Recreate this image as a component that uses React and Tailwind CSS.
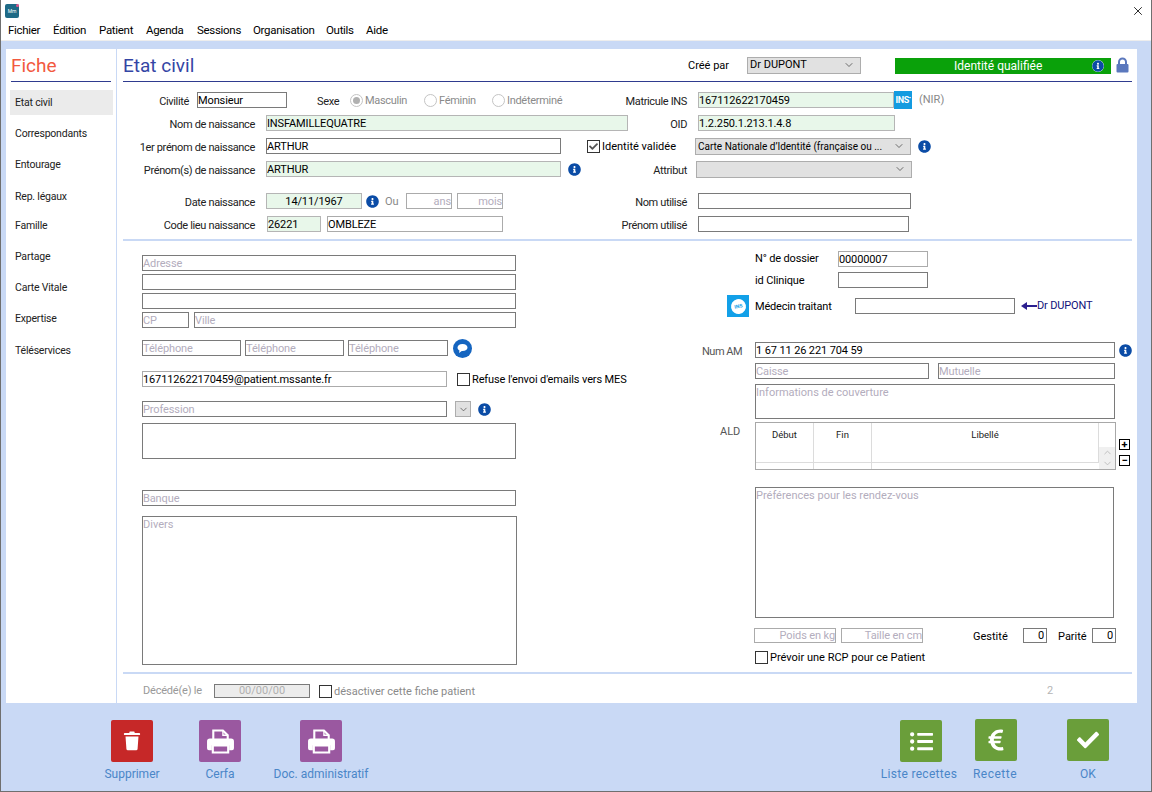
import { FaCheck, FaEuroSign, FaInfoCircle, FaListUl } from 'react-icons/fa';
import { ChevronDown, ChevronUp, X } from 'lucide-react';

const NAV = [
  ['Etat civil', 'mt-[8px] h-[25px]'],
  ['Correspondants', 'mt-[6px] h-[26px]'],
  ['Entourage', 'mt-[5px] h-[26px]'],
  ['Rep. légaux', 'mt-[6px] h-[26px]'],
  ['Famille', 'mt-[3px] h-[26px]'],
  ['Partage', 'mt-[5px] h-[26px]'],
  ['Carte Vitale', 'mt-[5px] h-[26px]'],
  ['Expertise', 'mt-[5px] h-[26px]'],
  ['Téléservices', 'mt-[6px] h-[26px]'],
];

function Field({ value, placeholder, className = '', green, soft, right, center, disabled }) {
  return (
    <input
      readOnly
      disabled={disabled}
      value={value || ''}
      placeholder={placeholder}
      className={`block h-[16px] shrink-0 border px-0 pt-[2px] text-[11px] tracking-[-0.12px] text-black outline-none placeholder:text-[#b3adbd] ${
        green ? 'border-[#b5b5b5] bg-[#e8f7ea]' : 'bg-white'
      } ${soft ? 'border-[#ababab]' : green ? '' : 'border-[#7a7a7a]'} ${right ? 'text-right placeholder:text-right' : ''} ${center ? 'text-center placeholder:text-center' : ''} ${className}`}
    />
  );
}

function Area({ placeholder, className = '' }) {
  return (
    <div className={`shrink-0 border border-[#7a7a7a] bg-white text-[11px] leading-[15px] text-[#b3adbd] ${className}`}>
      {placeholder}
    </div>
  );
}

function Label({ children, className = '' }) {
  return <div className={`shrink-0 whitespace-nowrap pt-[3px] text-right text-[11px] leading-[16px] tracking-[-0.35px] text-[#222] ${className}`}>{children}</div>;
}

function Select({ value, className = '' }) {
  return (
    <div className={`flex h-[17px] shrink-0 items-center justify-between border border-[#adadad] bg-[#e1e1e1] pl-[2px] pr-[5px] text-[11px] text-black ${className}`}>
      <span className="truncate">{value}</span>
      <ChevronDown size={12} strokeWidth={1.5} className="shrink-0 text-[#444]" />
    </div>
  );
}

function Info({ className = '' }) {
  return <FaInfoCircle size={13} className={`shrink-0 text-[#0b4ca6] ${className}`} />;
}

function Radio({ checked, label, className = '' }) {
  return (
    <div className={`flex shrink-0 items-center gap-[2px] text-[11px] tracking-[-0.3px] text-[#8a8a8a] ${className}`}>
      <span className="flex h-[13px] w-[13px] items-center justify-center rounded-full border border-[#c4c4c4] bg-white">
        {checked && <span className="h-[7px] w-[7px] rounded-full bg-[#b0b0b0]" />}
      </span>
      <span className="pt-[2px]">{label}</span>
    </div>
  );
}

function Check({ checked, label, className = '', muted }) {
  return (
    <div className={`flex shrink-0 items-center gap-[2px] text-[11px] ${muted ? 'text-[#8a8a8a]' : 'text-black'} ${className}`}>
      <span className="flex h-[13px] w-[13px] items-center justify-center border border-[#333] bg-white">
        {checked && <FaCheck size={9} className="text-[#555]" />}
      </span>
      <span className="pt-[2px]">{label}</span>
    </div>
  );
}

function TrashIcon() {
  return (
    <svg width="18" height="20" viewBox="0 0 20 22" fill="white">
      <rect x="1" y="2" width="18" height="2.4" rx="1" />
      <rect x="7" y="0.5" width="6" height="2" rx="1" />
      <path d="M2.8 6h14.4l-1 14a1.6 1.6 0 0 1-1.6 1.4H5.4A1.6 1.6 0 0 1 3.8 20z" />
    </svg>
  );
}

function PrintIcon() {
  return (
    <svg width="27" height="25" viewBox="0 0 28 26" fill="none" stroke="white" strokeWidth="2.2">
      <path d="M6.5 11V1.5h10l5 5V11" />
      <path d="M16.5 1.5v5h5" strokeWidth="1.4" />
      <path fill="white" stroke="none" d="M3 10h22a3 3 0 0 1 3 3v7a2 2 0 0 1-2 2h-3v-5H5v5H2a2 2 0 0 1-2-2v-7a3 3 0 0 1 3-3z" />
      <path d="M6 17h16v7.5H6z" />
    </svg>
  );
}

function Action({ label, color, width, children, className = '', labelClass = 'mt-[4px]' }) {
  return (
    <div className={`flex shrink-0 flex-col items-center ${className}`} style={{ width }}>
      <div className={`flex h-[42px] w-[42px] items-center justify-center rounded-[2px] ${color}`}>{children}</div>
      <div className={`whitespace-nowrap text-[12px] leading-[16px] text-[#4a86c8] ${labelClass}`}>{label}</div>
    </div>
  );
}

export default function App() {
  return (
    <div className="flex h-[792px] w-[1152px] flex-col overflow-hidden border-x border-b border-[#6f6f6f] bg-[#c9d9f5] font-['Roboto',sans-serif] text-black">
      {/* title bar */}
      <div className="relative h-[21px] shrink-0 bg-white pl-[4px] pt-[4px]">
        <div className="relative flex h-[14px] w-[14px] items-center justify-center rounded-[2px] bg-[#1e6a86] text-[5px] leading-none text-white">
          Mm
          <span className="absolute right-0 top-0 h-[3px] w-[3px] rounded-full bg-[#e0558a]" />
        </div>
        <X size={14} strokeWidth={1.4} className="absolute right-[6px] top-[4px] text-black" />
      </div>
      {/* menu */}
      <div className="flex h-[20px] shrink-0 items-center border-b border-[#ededed] bg-white pl-[7px] pt-[1px] text-[11.5px] tracking-[-0.3px] text-black">
        <span className="w-[45px]">Fichier</span>
        <span className="w-[46px]">Édition</span>
        <span className="w-[47px]">Patient</span>
        <span className="w-[51px]">Agenda</span>
        <span className="w-[56px]">Sessions</span>
        <span className="w-[73px]">Organisation</span>
        <span className="w-[40px]">Outils</span>
        <span>Aide</span>
      </div>

      {/* white panel */}
      <div className="mx-[5px] mt-[8px] flex h-[654px] w-[1131px] shrink-0 bg-white">
        <aside className="w-[111px] shrink-0 border-r border-[#c9d9f5]">
          <div className="mx-[5px] h-[33px] border-b border-[#2f3b8f] pt-[4px] text-[19px] leading-[26px] text-[#f2593f]">Fiche</div>
          {NAV.map(([label, cls], i) => (
            <div key={label} className={`ml-[4px] mr-[3px] flex items-center pl-[5px] text-[10.5px] tracking-[-0.2px] text-[#222] ${cls} ${i === 0 ? 'bg-[#ebebeb]' : ''}`}>
              {label}
            </div>
          ))}
        </aside>

        <main className="min-w-0 flex-1 pl-[6px] pr-[5px]">
          {/* header */}
          <div className="flex h-[33px] items-center border-b border-[#2f3b8f]">
            <div className="w-[565px] shrink-0 pt-[1px] text-[19px] leading-[24px] text-[#3445a5]">Etat civil</div>
            <div className="w-[59px] shrink-0 pt-[3px] text-[11px]">Créé par</div>
            <Select value="Dr DUPONT" className="w-[114px]" />
            <div className="ml-[34px] mt-[1px] flex h-[16px] w-[216px] shrink-0 items-center justify-between bg-[#0aa10a] pl-[59px] pr-[7px] pt-[1px] text-[12px] text-white">
              Identité qualifiée
              <FaInfoCircle size={12} className="rounded-full bg-white text-[#0b4ca6]" />
            </div>
            <svg width="13" height="16" viewBox="0 0 13 16" className="ml-[5px] shrink-0">
              <path d="M3 7V5a3.5 3.5 0 0 1 7 0v2" fill="none" stroke="#5b78bd" strokeWidth="2" />
              <rect x="0.5" y="7" width="12" height="8.5" rx="1" fill="#5b78bd" />
            </svg>
          </div>

          {/* identity rows */}
          <div className="mt-[10px] flex flex-col gap-[7px] border-b-2 border-[#c9d9f5] pb-[7px]">
            <div className="flex h-[16px] items-center">
              <Label className="w-[66px]">Civilité</Label>
              <Field value="Monsieur" className="ml-[8px] w-[90px]" />
              <Label className="ml-[30px] w-[28px] !text-left">Sexe</Label>
              <Radio checked label="Masculin" className="ml-[5px] w-[74px]" />
              <Radio label="Féminin" className="w-[68px]" />
              <Radio label="Indéterminé" className="w-[74px]" />
              <Label className="ml-[38px] w-[83px]">Matricule INS</Label>
              <Field green value="167112622170459" className="ml-[11px] w-[196px]" />
              <div className="flex h-[18px] w-[18px] shrink-0 items-start justify-center bg-[#139be0] pt-[4px] text-[9px] font-bold leading-[10px] tracking-tighter text-white">
                INS<span className="text-[6px] leading-[6px]">•</span>
              </div>
              <span className="ml-[7px] text-[11px] text-[#888]">(NIR)</span>
            </div>
            <div className="flex h-[16px] items-center">
              <Label className="w-[132px]">Nom de naissance</Label>
              <Field green value="INSFAMILLEQUATRE" className="ml-[11px] w-[362px]" />
              <Label className="w-[59px]">OID</Label>
              <Field green value="1.2.250.1.213.1.4.8" className="ml-[11px] w-[197px]" />
            </div>
            <div className="flex h-[16px] items-center">
              <Label className="w-[132px]">1er prénom de naissance</Label>
              <Field value="ARTHUR" className="ml-[11px] w-[295px]" />
              <Check checked label="Identité validée" className="ml-[26px] w-[108px]" />
              <Select value="Carte Nationale d’Identité (française ou ..." className="w-[216px] !text-[10px]" />
              <Info className="ml-[7px]" />
            </div>
            <div className="flex h-[16px] items-center">
              <Label className="w-[132px]">Prénom(s) de naissance</Label>
              <Field green value="ARTHUR" className="ml-[11px] w-[295px]" />
              <Info className="ml-[7px]" />
              <Label className="w-[106px]">Attribut</Label>
              <Select value="" className="ml-[9px] w-[216px]" />
            </div>
            <div className="mt-[9px] flex h-[16px] items-center">
              <Label className="w-[132px]">Date naissance</Label>
              <Field green center value="14/11/1967" className="ml-[11px] w-[96px]" />
              <Info className="ml-[4px]" />
              <span className="ml-[6px] w-[21px] shrink-0 pt-[2px] text-[11px] text-[#888]">Ou</span>
              <Field right soft placeholder="ans" className="w-[46px]" />
              <Field right soft placeholder="mois" className="ml-[5px] w-[46px]" />
              <Label className="w-[184px]">Nom utilisé</Label>
              <Field className="ml-[11px] w-[213px]" />
            </div>
            <div className="flex h-[16px] items-center">
              <Label className="w-[132px]">Code lieu naissance</Label>
              <Field green value="26221" className="ml-[12px] w-[54px]" />
              <Field soft value="OMBLEZE" className="ml-[6px] w-[176px]" />
              <Label className="w-[184px]">Prénom utilisé</Label>
              <Field className="ml-[11px] w-[211px]" />
            </div>
          </div>

          {/* two columns */}
          <div className="flex h-[433px] border-b-2 border-[#c9d9f5]">
            <div className="ml-[19px] w-[560px] shrink-0 pt-[14px]">
              <div className="flex flex-col gap-[3px]">
                <Field placeholder="Adresse" className="w-[374px]" />
                <Field className="w-[374px]" />
                <Field className="w-[374px]" />
                <div className="flex gap-[5px]">
                  <Field placeholder="CP" className="w-[47px]" />
                  <Field placeholder="Ville" className="w-[322px]" />
                </div>
              </div>
              <div className="mt-[12px] flex h-[16px] items-center gap-[4px]">
                <Field placeholder="Téléphone" className="w-[99px]" />
                <Field placeholder="Téléphone" className="w-[99px]" />
                <Field placeholder="Téléphone" className="w-[100px]" />
                <svg width="19" height="19" viewBox="0 0 19 19" className="ml-[1px] shrink-0">
                  <circle cx="9.5" cy="9.5" r="9.5" fill="#1565c0" />
                  <path d="M9.5 5C6.5 5 4.5 6.5 4.5 8.6c0 1.3.8 2.3 2 2.9L6 14l2.8-2h.7c3 0 5-1.4 5-3.4S12.5 5 9.5 5z" fill="white" />
                </svg>
              </div>
              <div className="mt-[15px] flex h-[16px] items-center">
                <Field soft value="167112622170459@patient.mssante.fr" className="w-[305px]" />
                <Check label="Refuse l'envoi d'emails vers MES" className="ml-[10px] tracking-[-0.12px]" />
              </div>
              <div className="mt-[14px] flex h-[16px] items-center">
                <Field placeholder="Profession" className="w-[305px]" />
                <div className="ml-[8px] flex h-[16px] w-[16px] shrink-0 items-center justify-center border border-[#adadad] bg-[#e1e1e1]">
                  <ChevronDown size={11} strokeWidth={1.5} className="text-[#444]" />
                </div>
                <Info className="ml-[7px]" />
              </div>
              <Area className="mt-[6px] h-[36px] w-[374px]" />
              <Field placeholder="Banque" className="mt-[31px] w-[374px]" />
              <Area placeholder="Divers" className="mt-[10px] h-[149px] w-[375px]" />
            </div>

            <div className="min-w-0 flex-1 pt-[10px]">
              <div className="ml-[53px] flex h-[16px] items-center">
                <span className="w-[83px] shrink-0 text-[11px] tracking-[-0.15px]">N° de dossier</span>
                <Field soft value="00000007" className="w-[90px]" />
              </div>
              <div className="ml-[53px] mt-[5px] flex h-[16px] items-center">
                <span className="w-[83px] shrink-0 pt-[3px] text-[11px] tracking-[-0.15px]">id Clinique</span>
                <Field className="w-[90px]" />
              </div>
              <div className="ml-[25px] mt-[7px] flex h-[22px] items-center">
                <div className="flex h-[22px] w-[22px] shrink-0 items-center justify-center bg-[#12a0e8]">
                  <span className="flex h-[15px] w-[15px] -rotate-12 items-center justify-center rounded-full bg-white text-[5px] font-bold text-[#12a0e8]">INS</span>
                </div>
                <span className="ml-[6px] w-[100px] shrink-0 pt-[3px] text-[11px] tracking-[-0.2px]">Médecin traitant</span>
                <Field className="w-[160px]" />
                <svg width="16" height="8" viewBox="0 0 16 8" className="ml-[6px] shrink-0">
                  <path d="M0 4l6-4v3h10v2H6v3z" fill="#2b1f8f" />
                </svg>
                <span className="text-[11px] tracking-[-0.15px] text-[#10107a]">Dr DUPONT</span>
              </div>
              <div className="mt-[25px] flex h-[16px] items-center">
                <span className="w-[53px] shrink-0 pt-[4px] text-[11px] tracking-[-0.5px] text-[#555]">Num AM</span>
                <Field value="1 67 11 26 221 704 59" className="w-[360px]" />
                <Info className="ml-[4px]" />
              </div>
              <div className="ml-[53px] mt-[5px] flex gap-[9px]">
                <Field placeholder="Caisse" className="w-[174px]" />
                <Field placeholder="Mutuelle" className="w-[177px]" />
              </div>
              <Area placeholder="Informations de couverture" className="ml-[53px] mt-[5px] h-[35px] w-[360px]" />
              <div className="mt-[3px] flex">
                <span className="w-[53px] shrink-0 pl-[18px] pt-[2px] text-[11px] text-[#555]">ALD</span>
                <div className="relative h-[48px] w-[361px] shrink-0 border border-[#a8a8a8] bg-white">
                  <div className="grid h-[46px] grid-cols-[58px_58px_227px_1fr] grid-rows-[39px_7px] text-center text-[9.5px] text-[#222]">
                    <div className="border-r border-[#dcdcdc] pt-[5px]">Début</div>
                    <div className="border-r border-[#dcdcdc] pt-[5px]">Fin</div>
                    <div className="border-r border-[#dcdcdc] pt-[5px]">Libellé</div>
                    <div />
                    <div className="border-r border-t border-[#dcdcdc]" />
                    <div className="border-r border-t border-[#dcdcdc]" />
                    <div className="border-t border-[#dcdcdc]" />
                    <div />
                  </div>
                  {/* scrollbar over the last column */}
                  <div className="absolute bottom-0 right-0 flex h-[22px] w-[16px] flex-col items-center bg-[#f0f0f0] text-[#bcbcbc]">
                    <ChevronUp size={11} />
                    <ChevronDown size={11} />
                  </div>
                </div>
                <div className="ml-[3px] mt-[17px] flex flex-col gap-[5px]">
                  <span className="flex h-[11px] w-[11px] items-center justify-center border border-black text-[11px] font-bold leading-none">+</span>
                  <span className="flex h-[11px] w-[11px] items-center justify-center border border-black text-[11px] font-bold leading-none">−</span>
                </div>
              </div>
              <Area placeholder="Préférences pour les rendez-vous" className="ml-[53px] mt-[17px] h-[131px] w-[359px]" />
              <div className="ml-[52px] mt-[10px] flex h-[15px] items-center">
                <Field right soft placeholder="Poids en kg" className="!h-[15px] w-[82px]" />
                <Field right soft placeholder="Taille en cm" className="!h-[15px] ml-[5px] w-[82px]" />
                <span className="ml-[50px] w-[50px] shrink-0 pt-[3px] text-[11px]">Gestité</span>
                <Field right value="0" className="!h-[15px] w-[24px] pr-[2px]" />
                <span className="ml-[11px] w-[34px] shrink-0 pt-[3px] text-[11px]">Parité</span>
                <Field right value="0" className="!h-[15px] w-[24px] pr-[2px]" />
              </div>
              <Check label="Prévoir une RCP pour ce Patient" className="ml-[53px] mt-[5px]" />
            </div>
          </div>

          {/* deceased row */}
          <div className="flex h-[27px] items-center pt-[7px] text-[11px] text-[#999]">
            <span className="ml-[20px] w-[71px] shrink-0 tracking-[-0.2px]">Décédé(e) le</span>
            <input readOnly value="00/00/00" className="h-[14px] w-[96px] shrink-0 border border-[#7a7a7a] bg-[#ececec] text-center text-[11px] text-[#b0b0b0] outline-none" />
            <Check muted label="désactiver cette fiche patient" className="ml-[9px] w-[728px]" />
            <span className="text-[#b5b5b5]">2</span>
          </div>
        </main>
      </div>

      {/* bottom actions */}
      <div className="flex flex-1 items-start pt-[17px]">
        <Action label="Supprimer" color="bg-[#c62828]" width={100} className="ml-[81px]"><TrashIcon /></Action>
        <Action label="Cerfa" color="bg-[#9a58a0]" width={60} className="ml-[8px]"><PrintIcon /></Action>
        <Action label="Doc. administratif" color="bg-[#9a58a0]" width={110} className="ml-[16px]"><PrintIcon /></Action>
        <Action label="Liste recettes" color="bg-[#6a9e3a]" width={90} className="ml-[500px]" labelClass="mt-[4px] -translate-x-[2px] tracking-[0.3px]"><FaListUl size={23} className="text-white" /></Action>
        <Action label="Recette" color="bg-[#6a9e3a]" width={60} className="-mt-[1px]" labelClass="mt-[5px] -translate-x-[1px] tracking-[0.5px]"><FaEuroSign size={24} className="text-white" /></Action>
        <Action label="OK" color="bg-[#6a9e3a]" width={60} className="ml-[32px] -mt-[1px]" labelClass="mt-[5px]"><FaCheck size={22} className="text-white" /></Action>
      </div>
    </div>
  );
}
